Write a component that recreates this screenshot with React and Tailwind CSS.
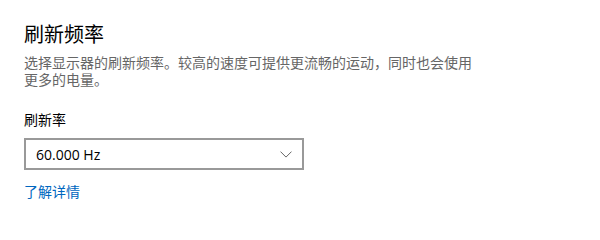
import React from 'react';

const CJK = { fontFamily: '"Noto Sans", "Noto Sans CJK SC", sans-serif' };

function Chevron() {
    return (
        <svg width="12" height="7" viewBox="0 0 12 7" fill="none" className="text-[#666]">
            <path d="M0.5 0.6 L6 6.1 L11.5 0.6" stroke="currentColor" strokeWidth="1" />
        </svg>
    );
}

export default function App() {
    return (
        <div className="w-[600px] h-[237px] bg-white pl-6 pt-[21px]" style={CJK}>
            {/* titre de la section */}
            <h1 className="text-[20px] leading-[28px] text-black font-normal">刷新频率</h1>
            <p className="mt-[5px] w-[456px] text-[14px] leading-[17px] text-[#666]">
                选择显示器的刷新频率。较高的速度可提供更流畅的运动，同时也会使用更多的电量。
            </p>

            <div className="mt-[22px] text-[14px] leading-[20px] text-black">刷新率</div>

            {/* liste déroulante */}
            <div className="mt-2 w-[280px] h-[32px] border-2 border-[#999] flex items-center justify-between pl-[10px] pr-[10px]">
                <span className="text-[14px] text-black" style={{ fontFamily: '"Open Sans", "Noto Sans", sans-serif' }}>60.000 Hz</span>
                <Chevron />
            </div>

            <a href="#" className="block mt-3 w-fit text-[14px] leading-[20px] text-[#0067c0]">了解详情</a>
        </div>
    );
}
